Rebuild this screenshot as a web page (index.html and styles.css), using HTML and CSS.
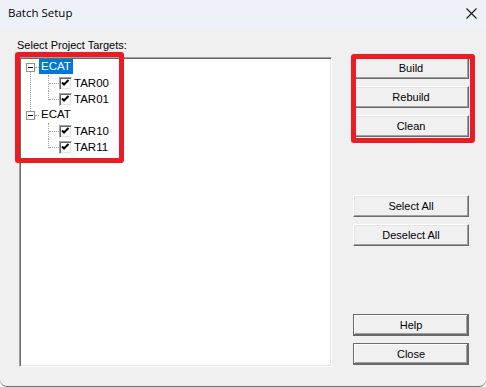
FILE: index.html
```html
<!DOCTYPE html>
<html lang="en">
<head>
    <meta charset="UTF-8">
    <title>Batch Setup</title>
    <link rel="stylesheet" href="styles.css">
</head>
<body>
    <div class="window">
        <div class="titlebar">
            <span class="title">Batch Setup</span>
            <span class="close">
                <svg width="11" height="11" viewBox="0 0 11 11"><path d="M0.5 0.5L10.5 10.5M10.5 0.5L0.5 10.5" stroke="#1a1a1a" stroke-width="1.1" fill="none"/></svg>
            </span>
        </div>
        <div class="content">
            <div class="targets">
                <div class="label">Select Project Targets:</div>
                <div class="listbox">
                    <ul class="tree">
                        <li class="root">
                            <div class="row"><span class="expander"></span><span class="hline"></span><span class="text selected">ECAT</span></div>
                            <ul>
                                <li class="leaf"><div class="row"><span class="check"><svg width="11" height="11" viewBox="0 0 11 11"><path d="M2 4.5L4 6.5L8.5 2" stroke="#000" stroke-width="2" fill="none"/></svg></span><span class="text">TAR00</span></div></li>
                                <li class="leaf"><div class="row"><span class="check"><svg width="11" height="11" viewBox="0 0 11 11"><path d="M2 4.5L4 6.5L8.5 2" stroke="#000" stroke-width="2" fill="none"/></svg></span><span class="text">TAR01</span></div></li>
                            </ul>
                        </li>
                        <li class="root">
                            <div class="row"><span class="expander"></span><span class="hline"></span><span class="text">ECAT</span></div>
                            <ul>
                                <li class="leaf"><div class="row"><span class="check"><svg width="11" height="11" viewBox="0 0 11 11"><path d="M2 4.5L4 6.5L8.5 2" stroke="#000" stroke-width="2" fill="none"/></svg></span><span class="text">TAR10</span></div></li>
                                <li class="leaf"><div class="row"><span class="check"><svg width="11" height="11" viewBox="0 0 11 11"><path d="M2 4.5L4 6.5L8.5 2" stroke="#000" stroke-width="2" fill="none"/></svg></span><span class="text">TAR11</span></div></li>
                            </ul>
                        </li>
                    </ul>
                </div>
            </div>
            <div class="actions">
                <div class="group">
                    <button class="btn">Build</button>
                    <button class="btn">Rebuild</button>
                    <button class="btn">Clean</button>
                </div>
                <div class="group select">
                    <button class="btn">Select All</button>
                    <button class="btn">Deselect All</button>
                </div>
                <div class="group bottom">
                    <button class="btn framed">Help</button>
                    <button class="btn framed">Close</button>
                </div>
            </div>
        </div>
        <!-- red annotation boxes -->
        <div class="mark mark-tree"></div>
        <div class="mark mark-build"></div>
    </div>
</body>
</html>
```

FILE: styles.css
```css
* {
    box-sizing: border-box;
}

html, body {
    margin: 0;
    height: 100%;
}

body {
    background: #ffffff;
    font-family: "Liberation Sans", Arial, sans-serif;
    font-size: 11px;
    color: #000;
}

.window {
    position: relative;
    width: 486px;
    height: 387px;
    background: #f0f0f0;
    border-bottom: 1px solid #6f6f6f;
    border-radius: 0 0 7px 7px;
    overflow: hidden;
}

.titlebar {
    height: 28px;
    background: #eef2f8;
    display: flex;
    align-items: center;
    justify-content: space-between;
    padding: 0 9px 3px 8px;
}

.title {
    font-family: "Open Sans", "Noto Sans", sans-serif;
    font-size: 11.5px;
    line-height: 16px;
    color: #000;
}

.close {
    display: flex;
    margin-top: 2px;
}

.content {
    display: flex;
    padding: 10px 0 0 17px;
}

.targets {
    width: 315px;
}

.label {
    line-height: 14px;
    margin-bottom: 5px;
}

.listbox {
    margin-left: 2px;
    width: 313px;
    height: 310px;
    background: #fff;
    border: 1px solid;
    border-color: #a0a0a0 #fff #fff #a0a0a0;
    box-shadow: inset 1px 1px 0 #696969, inset -1px -1px 0 #e3e3e3;
    padding: 1px 0 0 1px;
}

/* tree view */
.tree, .tree ul {
    list-style: none;
    margin: 0;
    padding: 0;
}

.tree li {
    position: relative;
}

.row {
    height: 16px;
    display: flex;
    align-items: center;
}

.root > .row {
    padding-left: 5px;
}

.expander {
    position: relative;
    width: 9px;
    height: 9px;
    border: 1px solid #919191;
    background: #fff;
}

.expander::before {
    content: "";
    position: absolute;
    left: 1px;
    top: 3px;
    width: 5px;
    height: 1px;
    background: #000;
}

.hline {
    width: 4px;
    border-top: 1px dotted #a0a0a0;
}

.text {
    height: 15px;
    line-height: 15px;
    padding: 0 2px;
    align-self: flex-start;
    font-size: 11.5px;
}

.selected {
    background: #0078d7;
    color: #fff;
}

.root:first-child::before {
    content: "";
    position: absolute;
    left: 9px;
    top: 13px;
    bottom: -4px;
    border-left: 1px dotted #a0a0a0;
}

.leaf > .row {
    padding-left: 38px;
}

.leaf::before {
    content: "";
    position: absolute;
    left: 27px;
    top: 0;
    height: 16px;
    border-left: 1px dotted #a0a0a0;
}

.leaf:last-child::before {
    height: 9px;
}

.leaf::after {
    content: "";
    position: absolute;
    left: 28px;
    top: 8px;
    width: 10px;
    border-top: 1px dotted #a0a0a0;
}

.check {
    width: 13px;
    height: 13px;
    background: #fff;
    border: 1px solid;
    border-color: #a0a0a0 #fff #fff #a0a0a0;
    box-shadow: inset 1px 1px 0 #696969, inset -1px -1px 0 #e3e3e3;
    display: flex;
}

.leaf .text {
    margin-top: 1px;
}

/* buttons */
.actions {
    margin-left: 21px;
    margin-top: 19px;
    width: 116px;
    display: flex;
    flex-direction: column;
}

.group {
    display: flex;
    flex-direction: column;
    gap: 7px;
}

.group.select {
    margin-top: 58px;
}

.group.bottom {
    margin-top: 68px;
}

.btn {
    height: 22px;
    padding: 0;
    font: inherit;
    color: #000;
    background: #f0f0f0;
    border: 1px solid;
    border-color: #fff #696969 #696969 #fff;
    box-shadow: inset -1px -1px 0 #a0a0a0, inset 1px 1px 0 #e3e3e3;
}

.btn.framed {
    border-color: #696969;
    box-shadow: inset -1px -1px 0 #696969, inset 1px 1px 0 #fff, inset -2px -2px 0 #a0a0a0;
}

/* red highlight frames */
.mark {
    position: absolute;
    border: 5px solid #ec1c24;
    border-radius: 3px;
}

.mark-tree {
    left: 15px;
    top: 52px;
    width: 109px;
    height: 111px;
}

.mark-build {
    left: 351px;
    top: 54px;
    width: 124px;
    height: 89px;
}
```
